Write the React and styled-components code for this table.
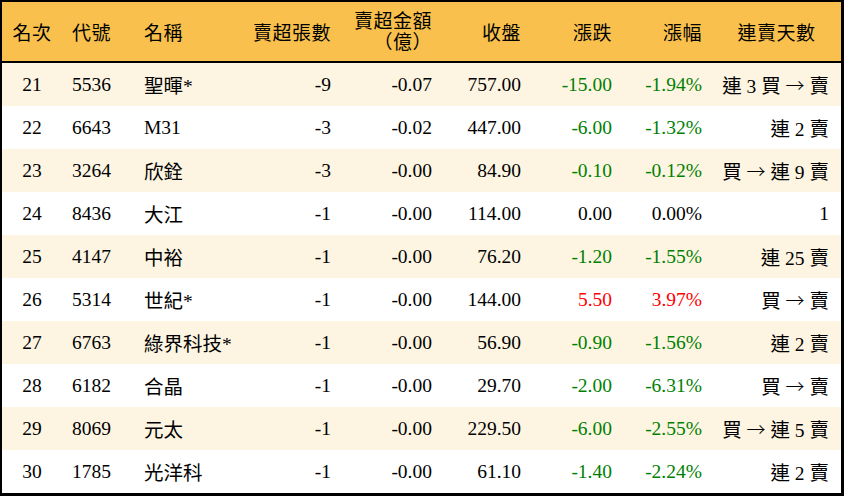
import React from "react";
import styled, { createGlobalStyle } from "styled-components";

const GlobalStyle = createGlobalStyle`
  html, body {
    margin: 0;
    padding: 0;
    background: #000;
  }
  body {
    font-family: "Liberation Serif", "Noto Sans CJK TC", serif;
  }
`;

const COLUMNS = "60px 72px 107px 100px 101px 89px 91px 90px 129px";

const rows = [
  { rank: 21, code: "5536", name: "聖暉*", lots: "-9", amount: "-0.07", close: "757.00", change: "-15.00", pct: "-1.94%", streak: "連 3 買 → 賣" },
  { rank: 22, code: "6643", name: "M31", lots: "-3", amount: "-0.02", close: "447.00", change: "-6.00", pct: "-1.32%", streak: "連 2 賣" },
  { rank: 23, code: "3264", name: "欣銓", lots: "-3", amount: "-0.00", close: "84.90", change: "-0.10", pct: "-0.12%", streak: "買 → 連 9 賣" },
  { rank: 24, code: "8436", name: "大江", lots: "-1", amount: "-0.00", close: "114.00", change: "0.00", pct: "0.00%", streak: "1" },
  { rank: 25, code: "4147", name: "中裕", lots: "-1", amount: "-0.00", close: "76.20", change: "-1.20", pct: "-1.55%", streak: "連 25 賣" },
  { rank: 26, code: "5314", name: "世紀*", lots: "-1", amount: "-0.00", close: "144.00", change: "5.50", pct: "3.97%", streak: "買 → 賣" },
  { rank: 27, code: "6763", name: "綠界科技*", lots: "-1", amount: "-0.00", close: "56.90", change: "-0.90", pct: "-1.56%", streak: "連 2 賣" },
  { rank: 28, code: "6182", name: "合晶", lots: "-1", amount: "-0.00", close: "29.70", change: "-2.00", pct: "-6.31%", streak: "買 → 賣" },
  { rank: 29, code: "8069", name: "元太", lots: "-1", amount: "-0.00", close: "229.50", change: "-6.00", pct: "-2.55%", streak: "買 → 連 5 賣" },
  { rank: 30, code: "1785", name: "光洋科", lots: "-1", amount: "-0.00", close: "61.10", change: "-1.40", pct: "-2.24%", streak: "連 2 賣" },
];

const trend = (v) => {
  const n = parseFloat(v);
  if (n > 0) return "up";
  if (n < 0) return "down";
  return "flat";
};

// the arrow is a full-width glyph from the CJK font in the original
const withArrow = (text) =>
  text.split(/(→)/).map((part, i) =>
    part === "→" ? <Arrow key={i}>{part}</Arrow> : part
  );

export default function App() {
  return (
    <>
      <GlobalStyle />
      <Frame>
        <HeaderRow>
          <HeadCell $align="center">名次</HeadCell>
          <HeadCell>代號</HeadCell>
          <HeadCell>名稱</HeadCell>
          <HeadCell $align="right">賣超張數</HeadCell>
          <HeadCell $align="right">
            <TwoLine>
              賣超金額
              <br />
              （億）
            </TwoLine>
          </HeadCell>
          <HeadCell $align="right">收盤</HeadCell>
          <HeadCell $align="right">漲跌</HeadCell>
          <HeadCell $align="right">漲幅</HeadCell>
          <HeadCell $align="center">連賣天數</HeadCell>
        </HeaderRow>
        {rows.map((r, i) => (
          <Row key={r.rank} $striped={i % 2 === 0}>
            <Cell $align="center">{r.rank}</Cell>
            <Cell>{r.code}</Cell>
            <Cell>{r.name}</Cell>
            <Cell $align="right">{r.lots}</Cell>
            <Cell $align="right">{r.amount}</Cell>
            <Cell $align="right">{r.close}</Cell>
            <Cell $align="right" $trend={trend(r.change)}>
              {r.change}
            </Cell>
            <Cell $align="right" $trend={trend(r.pct)}>
              {r.pct}
            </Cell>
            <Cell $align="right" $last>
              {withArrow(r.streak)}
            </Cell>
          </Row>
        ))}
      </Frame>
    </>
  );
}

const Frame = styled.div`
  width: 844px;
  height: 496px;
  box-sizing: border-box;
  border: 2px solid #000;
  border-right-width: 3px;
  border-bottom-width: 3px;
  background: #fff;
  display: flex;
  flex-direction: column;
`;

const HeaderRow = styled.div`
  display: grid;
  grid-template-columns: ${COLUMNS};
  height: 59px;
  background: #f9c04d;
  border-bottom: 2px solid #000;
`;

const Row = styled.div`
  display: grid;
  grid-template-columns: ${COLUMNS};
  height: 43px;
  background: ${(p) => (p.$striped ? "#fdf5e2" : "#fff")};
`;

const justify = (a) =>
  a === "center" ? "center" : a === "right" ? "flex-end" : "flex-start";

const HeadCell = styled.div`
  display: flex;
  align-items: center;
  justify-content: ${(p) => justify(p.$align)};
  padding: 0 10px;
  font-size: 19px;
  letter-spacing: 0.5px;
  color: #000;
  white-space: nowrap;
`;

const TwoLine = styled.span`
  display: inline-block;
  text-align: right;
  line-height: 21px;
`;

const Cell = styled.div`
  display: flex;
  align-items: center;
  justify-content: ${(p) => justify(p.$align)};
  padding: 0 ${(p) => (p.$last ? "12px" : "10px")} 0 10px;
  font-size: 19.5px;
  white-space: pre;
  color: ${(p) =>
    p.$trend === "up" ? "#ff0000" : p.$trend === "down" ? "#008000" : "#000"};
`;

const Arrow = styled.span`
  font-family: "Noto Sans CJK TC", sans-serif;
  font-size: 19px;
  font-weight: 300;
`;
